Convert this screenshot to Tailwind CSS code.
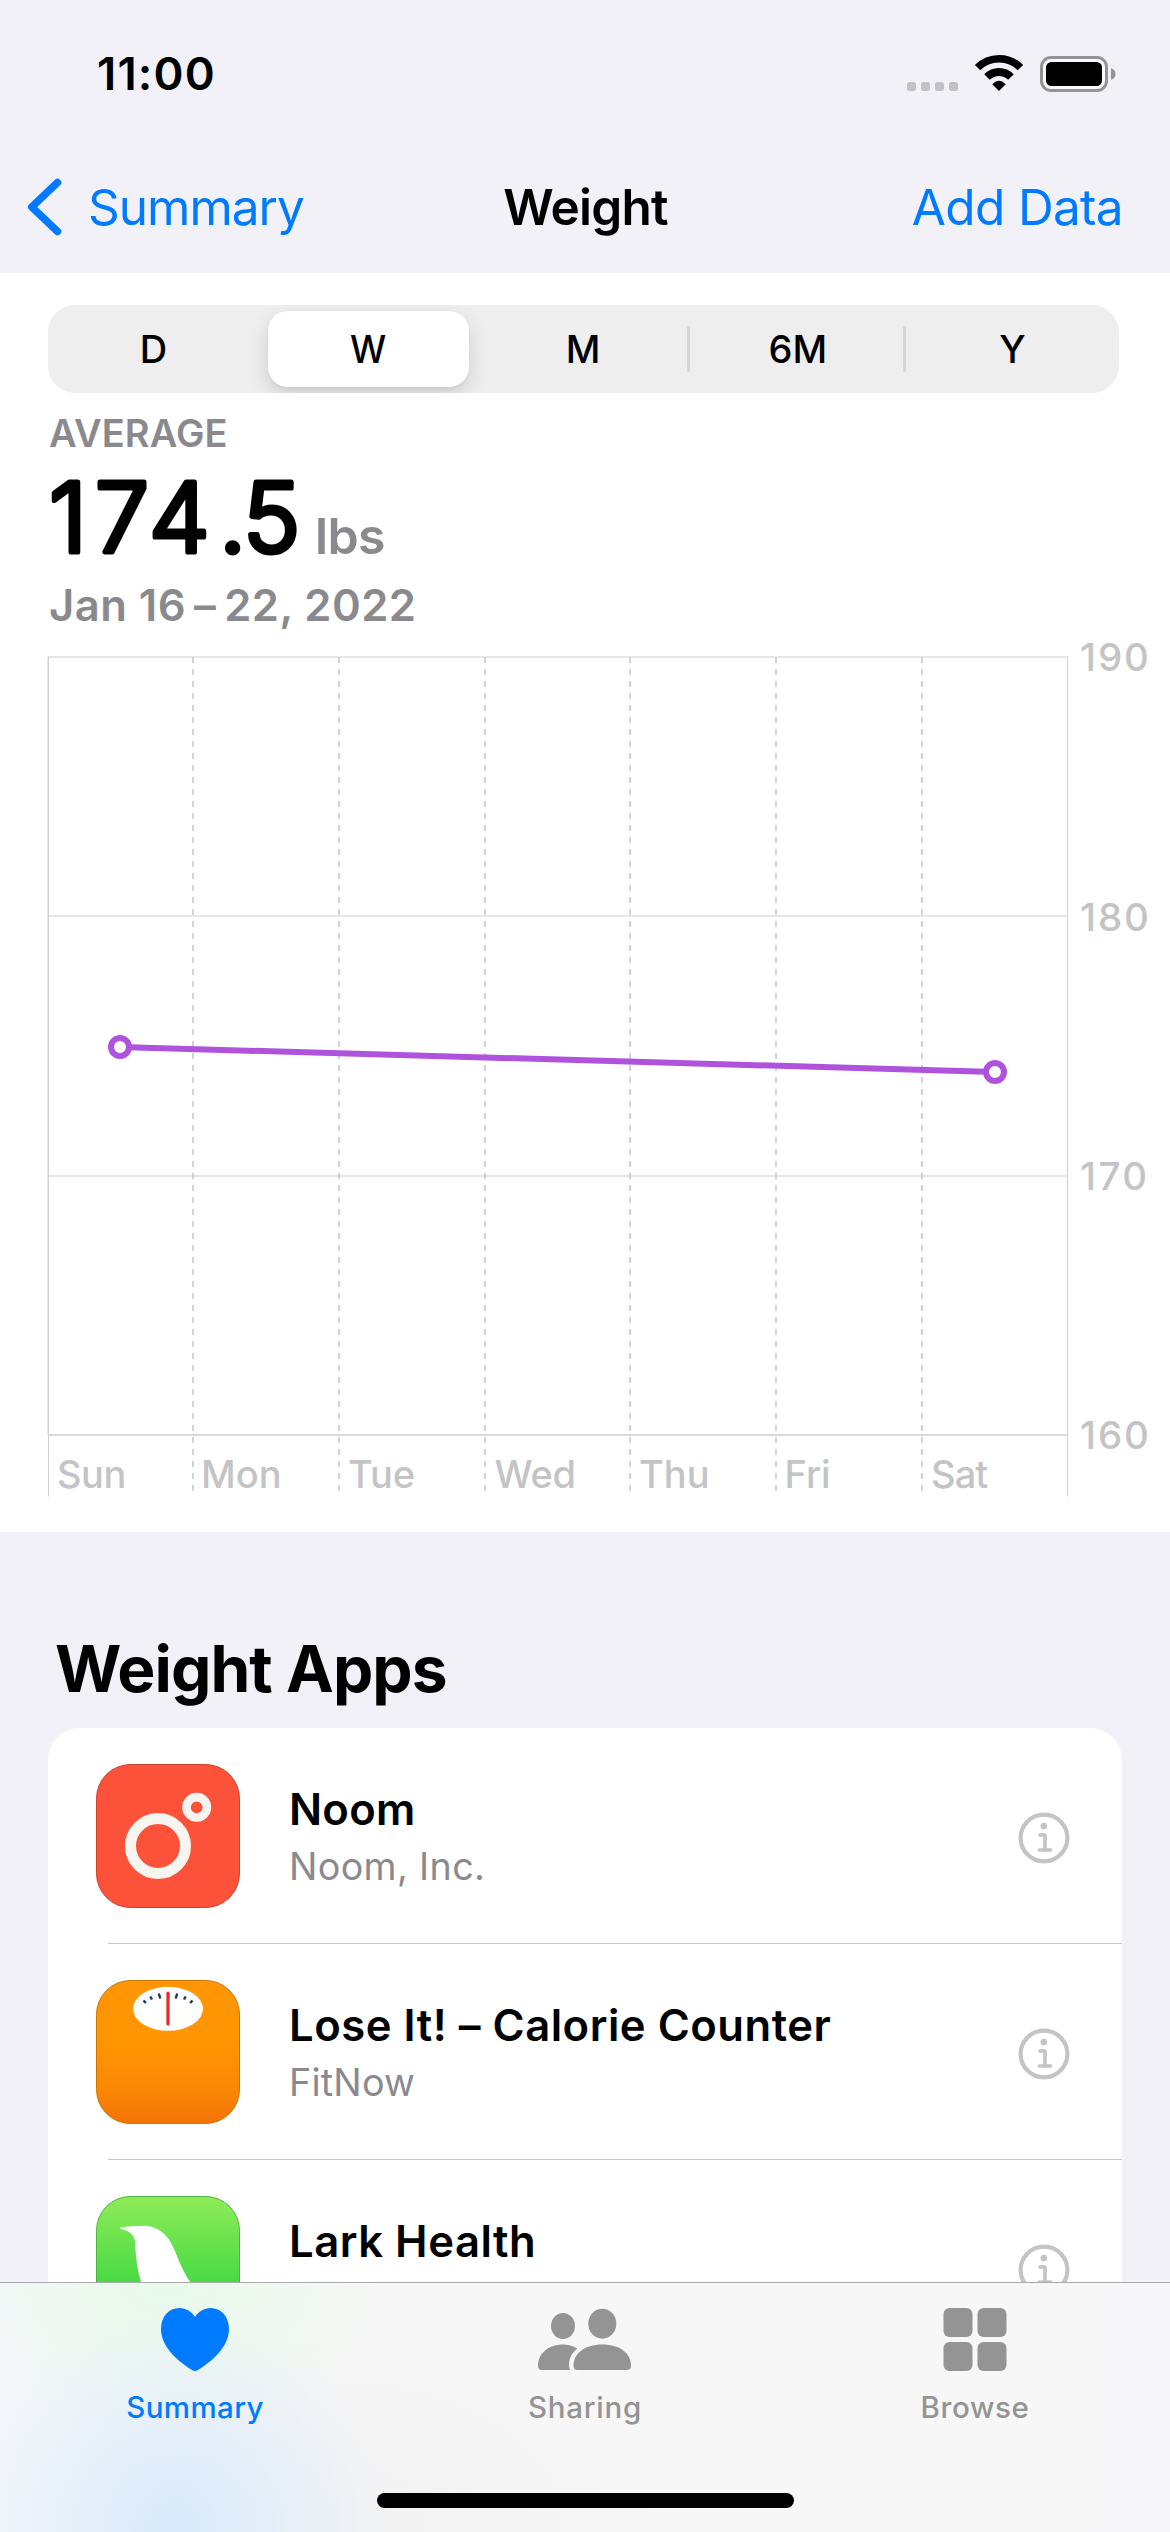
<!DOCTYPE html>
<html lang="en">
<head>
<meta charset="utf-8">
<title>Weight</title>
<script src="https://cdn.jsdelivr.net/npm/@tailwindcss/browser@4"></script>
</head>
<body class="bg-[#f2f1f7]">
<div class="relative w-[1170px] h-[2532px] overflow-hidden bg-[#f2f1f7] text-black font-['Inter',sans-serif]">

  <!-- Status bar -->
  <div class="h-[148px] flex items-center justify-between pl-[97px] pr-[50px]">
    <div class="text-[45.5px] leading-[56px] font-semibold tracking-[1.17px]">11:00</div>
    <svg class="w-[220px] h-[148px]" viewBox="900 0 220 148">
      <g fill="#c2c1c6">
        <rect x="907" y="82" width="9" height="9" rx="2.5"/><rect x="921" y="82" width="9" height="9" rx="2.5"/>
        <rect x="935" y="82" width="9" height="9" rx="2.5"/><rect x="949" y="82" width="9" height="9" rx="2.5"/>
      </g>
      <g fill="none" stroke="#000">
        <path stroke-width="7.6" d="M977.6 67.6A30.2 30.2 0 0 1 1020.4 67.6"/>
        <path stroke-width="8" d="M987 77A17 17 0 0 1 1011 77"/>
      </g>
      <path d="M999 91L992.3 84.2Q999 77.4 1005.7 84.2Z"/>
      <rect x="1041.5" y="57.5" width="65" height="33" rx="9.5" fill="#fafafc" stroke="#949497" stroke-width="3"/>
      <rect x="1046" y="62" width="56" height="24" rx="5.5"/>
      <path d="M1111 68Q1115.500 70 1115.500 74T1111 80Z" fill="#949497"/>
    </svg>
  </div>

  <!-- Navigation bar -->
  <div class="h-[125px] pb-[7px] pl-[24px] pr-[48px] grid grid-cols-3 items-center text-[49.5px] leading-[60px]">
    <div class="flex items-center text-[#007aff]">
      <svg class="w-[40px] h-[60px]" viewBox="0 0 40 60" fill="none" stroke="#007aff" stroke-width="7.5" stroke-linecap="round" stroke-linejoin="round"><path d="M33.500 5.500L7.800 30L33.500 54.500"/></svg>
      <span class="ml-[24px] tracking-[-1px]">Summary</span>
    </div>
    <div class="text-center font-semibold tracking-[-0.74px] pl-[25px]">Weight</div>
    <div class="text-right text-[#007aff] tracking-[-0.66px] -mr-px">Add Data</div>
  </div>

  <!-- Summary and chart -->
  <div class="h-[1259px] bg-white pt-[32px]">
    <div class="ml-[48px] w-[1071px] h-[88px] rounded-[27px] bg-[#eeeeee] overflow-hidden">
      <div class="-ml-[2px] w-[1074px] h-full grid grid-cols-5 items-center text-center text-[38px] leading-[88px] font-medium">
        <div>D</div>
        <div class="mx-auto w-[201px] h-[76px] leading-[76px] rounded-[20px] bg-white shadow-[0_8px_20px_rgba(0,0,0,0.13),0_3px_3px_rgba(0,0,0,0.04)]"><span class="inline-block scale-x-95">W</span></div>
        <div>M</div>
        <div class="relative"><i class="absolute -left-[3px] top-[21px] w-[3px] h-[46px] rounded-full bg-[#d6d6d7]"></i>6M</div>
        <div class="relative"><i class="absolute -left-[2px] top-[21px] w-[3px] h-[46px] rounded-full bg-[#d6d6d7]"></i>Y</div>
      </div>
    </div>
    <div class="mt-[16px] ml-[49px] h-[48px] text-[38px] leading-[48px] font-semibold text-[#8a8a8e] tracking-[0.1px]">AVERAGE</div>
    <div class="h-[122px] flex pl-[48px]">
      <svg class="w-[267px] h-[122px]" viewBox="48 457 267 122">
        <text x="49 95 149 217.500 243" y="552.2" font-size="96.500" font-weight="300" stroke="#000" stroke-width="5.2" stroke-linejoin="round" class="font-['Inter',sans-serif]">174<tspan dx="1.500">.</tspan>5</text>
      </svg>
      <div class="mt-[49px] text-[50px] leading-[60px] font-semibold text-[#8a8a8e] tracking-[-0.6px]">lbs</div>
    </div>
    <div class="ml-[49px] h-[54px] text-[43.6px] leading-[54px] font-semibold text-[#8a8a8e] flex tracking-[0.45px]"><span>Jan 16</span><span class="mx-[8px]">–</span><span>22, 2022</span></div>

    <svg class="mt-[24px] block w-[1170px] h-[860px] overflow-visible" viewBox="0 657 1170 860">
      <g fill="#e5e5ea">
        <rect x="48" y="656" width="1020" height="2"/><rect x="48" y="915" width="1020" height="2"/><rect x="48" y="1175" width="1020" height="2"/>
        <rect x="47" y="657" width="1" height="778"/>
      </g>
      <rect x="48" y="1434" width="1020" height="2" fill="#d9d9dc"/>
      <rect x="48" y="657" width="1" height="839.500" fill="#d1d1d6"/>
      <rect x="1067" y="657" width="1" height="839.500" fill="#d1d1d6"/>
      <g stroke="#d1d1d6" stroke-width="2" stroke-dasharray="6 6">
        <path d="M193 657V1492M339 657V1492M485 657V1492M630 657V1492M776 657V1492M922 657V1492"/>
      </g>
      <path d="M120 1047L995 1072" stroke="#af52de" stroke-width="6"/>
      <g fill="#fff" stroke="#af52de" stroke-width="6"><circle cx="120" cy="1047" r="9"/><circle cx="995" cy="1072" r="9"/></g>
      <g class="font-['Inter',sans-serif]" fill="#c4c4c6" font-weight="500" font-size="38.500">
        <g letter-spacing="1.9">
          <text x="1080" y="671">190</text><text x="1080" y="930.500">180</text><text x="1080" y="1190" letter-spacing="2.400">170</text><text x="1080" y="1449">160</text>
        </g>
        <g font-size="38">
          <text x="57" y="1487.500" letter-spacing="-0.5">Sun</text><text x="201" y="1487.500">Mon</text><text x="348" y="1487.500">Tue</text><text x="494.500" y="1487.500" letter-spacing="-0.3">Wed</text><text x="639" y="1487.500">Thu</text><text x="784.500" y="1487.500">Fri</text><text x="931" y="1487.500" letter-spacing="-0.9">Sat</text>
        </g>
      </g>
    </svg>
  </div>

  <!-- Weight apps -->
  <h2 class="mt-[98px] ml-[55px] h-[78px] text-[64px] leading-[78px] font-bold tracking-[-0.93px]">Weight Apps</h2>
  <div class="mt-[20px] mx-[48px] h-[900px] rounded-[32px] bg-white">
    <div class="relative h-[216px] pl-[48px] pr-[52px] flex items-center">
      <svg class="w-[144px] h-[144px]" viewBox="0 0 144 144">
        <rect x=".5" y=".5" width="143" height="143" rx="34" fill="#fd523a" stroke="#c94330"/>
        <g fill="none" stroke="#f7f5ef"><circle cx="62" cy="82" r="27.500" stroke-width="11"/><circle cx="100.700" cy="43.300" r="10.200" stroke-width="8.600"/></g>
      </svg>
      <div class="ml-[49px] flex flex-col gap-[6px]">
        <div class="text-[43.6px] leading-[54px] font-semibold tracking-[0.27px]">Noom</div>
        <div class="text-[37.7px] leading-[46px] text-[#8a8a8e] tracking-[0.34px]">Noom, Inc.</div>
      </div>
      <svg class="ml-auto mt-[3px] w-[52px] h-[52px]" viewBox="0 0 52 52" fill="none" stroke="#c4c4c6"><circle cx="26" cy="26" r="23.400" stroke-width="4.200"/><circle cx="25.800" cy="14" r="3.300" fill="#c4c4c6" stroke="none"/><path stroke-width="3.600" stroke-linecap="round" stroke-linejoin="round" d="M21.800 23H27V38M21.500 38H32.600"/></svg>
      <div class="absolute left-[60px] right-0 bottom-0 h-px bg-[#c6c6c8]"></div>
    </div>
    <div class="relative h-[216px] pl-[48px] pr-[52px] flex items-center">
      <svg class="w-[144px] h-[144px]" viewBox="0 0 144 144">
        <defs><linearGradient id="orange" x1="0" y1="0" x2="0" y2="1"><stop offset=".45" stop-color="#ff9502"/><stop offset=".75" stop-color="#fb8804"/><stop offset="1" stop-color="#f37306"/></linearGradient></defs>
        <rect x=".5" y=".5" width="143" height="143" rx="34" fill="url(#orange)" stroke="#c87505"/>
        <ellipse cx="72" cy="28.800" rx="35" ry="22" fill="#fff"/>
        <path d="M72 13V44" stroke="#f02424" stroke-width="3.200" stroke-linecap="round"/>
        <g stroke="#17365f" stroke-width="2.400"><path d="M62.800 13.500L64.300 18.500M54.300 16.500L56 19.500M47.500 20.500L49.800 23M81.200 13.500L79.700 18.500M89.700 16.500L88 19.500M96.500 20.500L94.200 23"/></g>
      </svg>
      <div class="ml-[49px] flex flex-col gap-[6px]">
        <div class="text-[43.6px] leading-[54px] font-semibold tracking-[0.52px]">Lose It! – Calorie Counter</div>
        <div class="text-[37.7px] leading-[46px] text-[#8a8a8e] tracking-[0.2px]">FitNow</div>
      </div>
      <svg class="ml-auto mt-[3px] w-[52px] h-[52px]" viewBox="0 0 52 52" fill="none" stroke="#c4c4c6"><circle cx="26" cy="26" r="23.400" stroke-width="4.200"/><circle cx="25.800" cy="14" r="3.300" fill="#c4c4c6" stroke="none"/><path stroke-width="3.600" stroke-linecap="round" stroke-linejoin="round" d="M21.800 23H27V38M21.500 38H32.600"/></svg>
      <div class="absolute left-[60px] right-0 bottom-0 h-px bg-[#c6c6c8]"></div>
    </div>
    <div class="h-[216px] pl-[48px] pr-[52px] flex items-center">
      <svg class="w-[144px] h-[144px]" viewBox="0 0 144 144">
        <defs><linearGradient id="green" x1="0" y1="0" x2="0" y2="1"><stop offset="0" stop-color="#8eec58"/><stop offset=".6" stop-color="#48da45"/><stop offset="1" stop-color="#20c840"/></linearGradient></defs>
        <rect x=".5" y=".5" width="143" height="143" rx="34" fill="url(#green)" stroke="#4fb340"/>
        <path fill="#fff" d="M24 31.500C31 30.500 40 29.700 48 29.700C60 30 68 36 74 45C81 57 84 72 95 87L110 110H52L45 86C42 76 40.300 66 39.500 54C39.500 46 39 42 36 38.500C33 35.500 29 33.500 25 33Z"/>
      </svg>
      <div class="ml-[49px] flex flex-col gap-[6px]">
        <div class="text-[43.6px] leading-[54px] font-semibold tracking-[0.53px]">Lark Health</div>
        <div class="h-[46px]"></div>
      </div>
      <svg class="ml-auto mt-[3px] w-[52px] h-[52px]" viewBox="0 0 52 52" fill="none" stroke="#c4c4c6"><circle cx="26" cy="26" r="23.400" stroke-width="4.200"/><circle cx="25.800" cy="14" r="3.300" fill="#c4c4c6" stroke="none"/><path stroke-width="3.600" stroke-linecap="round" stroke-linejoin="round" d="M21.800 23H27V38M21.500 38H32.600"/></svg>
    </div>
  </div>

  <!-- Tab bar over the list -->
  <div class="absolute left-0 bottom-0 w-full h-[250px] border-t border-[#a9a9ad] bg-[#f7f7f7] bg-[radial-gradient(210px_220px_at_175px_245px,#d9eafb_0%,#dcebfacc_30%,#e8f0f800_100%),radial-gradient(220px_150px_at_170px_0px,#e8faea_0%,#eaf8ec00_100%),radial-gradient(330px_200px_at_330px_240px,#f2f2f3_0%,#f2f2f300_100%),linear-gradient(90deg,#f5f7fb_0%,#f3f5fc00_12%,#f7f7f700_90%,#f7f7fb_100%)]">
    <div class="grid grid-cols-3 pt-[25px] text-[29.5px] leading-[36px] font-medium text-[#949494]">
      <div class="flex flex-col items-center gap-[17px] text-[#007aff] tracking-[0.4px]">
        <svg class="w-[68px] h-[64px]" viewBox="0 0 68 64" fill="#007aff"><path d="M34 9C30.500 3.500 25 0 18.500 0C8 0 0 8.500 0 21C0 36 12 50 31 62Q34 64 37 62C56 50 68 36 68 21C68 8.500 60 0 49.500 0C43 0 37.500 3.500 34 9Z"/></svg>
        <div>Summary</div>
      </div>
      <div class="flex flex-col items-center gap-[17px] tracking-[0.75px]">
        <svg class="w-[94px] h-[64px]" viewBox="538 2308 94 64" fill="#949494">
          <ellipse cx="563" cy="2326" rx="12" ry="13"/><ellipse cx="602.300" cy="2323.700" rx="14" ry="15"/>
          <path d="M577.500 2370Q573.500 2370 573.500 2365.500C573.500 2354 584 2344.500 602.300 2344.500S631 2354 631 2365.500Q631 2370 627 2370Z"/>
          <path d="M542 2370Q538 2370 538 2365.500C538 2354 548 2344.500 563 2344.500Q571 2344.500 577.300 2348.500C570 2354.500 567.500 2362 570 2370Z"/>
        </svg>
        <div>Sharing</div>
      </div>
      <div class="flex flex-col items-center gap-[17px] tracking-[0.6px]">
        <svg class="w-[64px] h-[64px]" viewBox="0 0 64 64" fill="#949494"><rect x=".5" width="29" height="29" rx="6"/><rect x="34.500" width="29" height="29" rx="6"/><rect x=".5" y="34" width="29" height="29" rx="6"/><rect x="34.500" y="34" width="29" height="29" rx="6"/></svg>
        <div>Browse</div>
      </div>
    </div>
    <div class="mt-[68px] mx-auto w-[417px] h-[15px] rounded-full bg-black"></div>
  </div>
</div>
</body>
</html>
